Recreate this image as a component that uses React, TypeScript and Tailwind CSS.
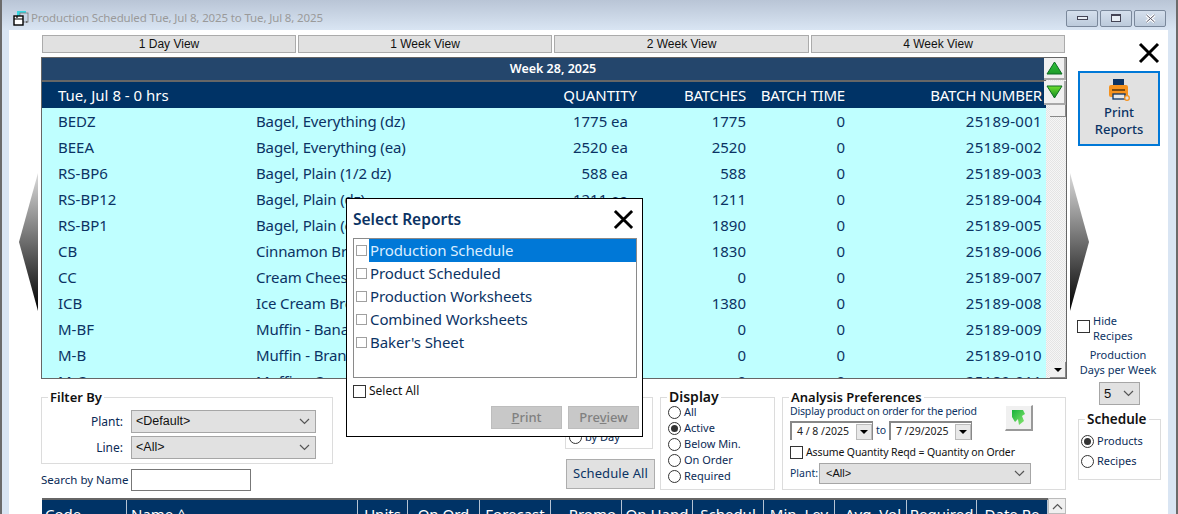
import React from "react";

const rows = [
  ["BEDZ", "Bagel, Everything (dz)", "1775 ea", "1775", "0", "25189-001"],
  ["BEEA", "Bagel, Everything (ea)", "2520 ea", "2520", "0", "25189-002"],
  ["RS-BP6", "Bagel, Plain (1/2 dz)", "588 ea", "588", "0", "25189-003"],
  ["RS-BP12", "Bagel, Plain (dz)", "1211 ea", "1211", "0", "25189-004"],
  ["RS-BP1", "Bagel, Plain (ea)", "1890 ea", "1890", "0", "25189-005"],
  ["CB", "Cinnamon Bread", "1830 ea", "1830", "0", "25189-006"],
  ["CC", "Cream Cheese", "0 ea", "0", "0", "25189-007"],
  ["ICB", "Ice Cream Bread", "1380 ea", "1380", "0", "25189-008"],
  ["M-BF", "Muffin - Banana", "0 ea", "0", "0", "25189-009"],
  ["M-B", "Muffin - Bran", "0 ea", "0", "0", "25189-010"],
  ["M-C", "Muffin - Corn", "0 ea", "0", "0", "25189-011"],
];

const reports = ["Production Schedule", "Product Scheduled", "Production Worksheets", "Combined Worksheets", "Baker's Sheet"];

const bottomCols: [string, string][] = [
  ["Code", "w-[85px] pl-[3px]"],
  ["Name ^", "w-[231px] pl-[4px]"],
  ["Units", "w-[50px] text-center"],
  ["On Ord", "w-[72px] text-center"],
  ["Forecast", "w-[71px] text-center"],
  ["Promo", "w-[71px] text-right pr-[5px]"],
  ["On Hand", "w-[71px] text-center"],
  ["Schedul", "w-[71px] text-center"],
  ["Min. Lev", "w-[71px] text-center"],
  ["Avg. Vol", "w-[72px] text-right pr-[5px]"],
  ["Required", "w-[70px] text-center"],
  ["Date Re", "w-[71px] text-center"],
];

function Chevron({ className = "" }: { className?: string }) {
  return (
    <svg width="11" height="7" viewBox="0 0 11 7" className={className}>
      <path d="M1 1l4.5 4.5L10 1" fill="none" stroke="#555" strokeWidth="1.2" />
    </svg>
  );
}

function BigX({ size }: { size: number }) {
  return (
    <svg width={size} height={size} viewBox="0 0 22 22">
      <path d="M2 2l18 18M20 2L2 20" stroke="#000" strokeWidth="3" />
    </svg>
  );
}

function Radio({ on, label, cls = "" }: { on?: boolean; label: string; cls?: string }) {
  return (
    <div className={`flex items-center gap-[3px] h-4 text-[11px] text-[#0a2a55] whitespace-nowrap ${cls}`}>
      <span className="w-[13px] h-[13px] rounded-full border border-[#333] bg-white flex items-center justify-center shrink-0">
        {on && <span className="w-[7px] h-[7px] rounded-full bg-[#333]" />}
      </span>
      <span>{label}</span>
    </div>
  );
}

function Group({ title, cls, titleCls = "text-[13px]", children }: { title?: string; cls: string; titleCls?: string; children: React.ReactNode }) {
  return (
    <div className={`relative border border-[#dcdcdc] ${cls}`}>
      {title && <span className={`absolute -top-[10px] left-[6px] bg-white px-[2px] font-semibold text-[#111] leading-[18px] whitespace-nowrap ${titleCls}`}>{title}</span>}
      {children}
    </div>
  );
}

function DateBox({ value }: { value: string }) {
  return (
    <div className="flex h-[19px] w-[83px] border-t-2 border-l-2 border-r border-[#888] bg-white items-center">
      <span className="flex-1 pl-[5px] text-[10.5px] text-[#222] whitespace-nowrap">{value}</span>
      <span className="w-[16px] h-[16px] bg-[#e8e8e8] border border-[#bbb] flex items-center justify-center shrink-0">
        <span className="w-0 h-0 border-l-[4px] border-r-[4px] border-t-[4px] border-l-transparent border-r-transparent border-t-black" />
      </span>
    </div>
  );
}

function Select({ value, w, h = "h-[23px]", pl = "pl-1", size = "text-[12.5px]" }: { value: string; w: string; h?: string; pl?: string; size?: string }) {
  return (
    <div className={`flex items-center justify-between bg-[#e1e1e1] border border-[#a6a6a6] ${w} ${h} ${pl} pr-[5px] text-[#111] ${size}`} style={{ fontFamily: "'Liberation Sans', sans-serif" }}>
      <span>{value}</span>
      <Chevron />
    </div>
  );
}

function GreenTri({ down }: { down?: boolean }) {
  return (
    <svg width="17" height="14" viewBox="0 0 17 14">
      <defs>
        <linearGradient id={down ? "gd" : "gu"} x1="0" y1="0" x2="0" y2="1">
          <stop offset="0" stopColor={down ? "#6fe02e" : "#2fc43a"} />
          <stop offset="1" stopColor={down ? "#0f8a22" : "#1e9a2a"} />
        </linearGradient>
      </defs>
      <path d={down ? "M1 1h15L8.5 13z" : "M8.5 1L16 13H1z"} fill={`url(#${down ? "gd" : "gu"})`} stroke="#0c6b22" strokeWidth="1" />
    </svg>
  );
}

export default function App() {
  return (
    <div className="relative w-[1178px] h-[514px] overflow-hidden flex flex-col bg-[#d9e5f3] border-l-2 border-r-2 border-[#6b6b6b]" style={{ fontFamily: "'Noto Sans', 'Open Sans', sans-serif" }}>
      {/* Title bar */}
      <div className="h-[30px] flex items-center pt-[6px] pl-[10px] pr-[10px] bg-gradient-to-b from-[#b9c5d6] to-[#d9e5f3] shrink-0">
        <svg width="18" height="16" viewBox="0 0 18 16" className="shrink-0">
          <rect x="5" y="1" width="9" height="7" fill="#35d6e0" />
          <rect x="8" y="3" width="8" height="9" fill="#c6d4e4" stroke="#777" strokeWidth="0.8" />
          <rect x="2" y="6" width="9" height="9" fill="#fff" stroke="#000" strokeWidth="1.4" />
          <path d="M2 9h9M5 6v2" stroke="#000" strokeWidth="1.2" />
          <path d="M14 11l2 1-2 1z" fill="#555" />
        </svg>
        <span className="ml-[1px] text-[11.5px] text-[#9a9a9a] tracking-[-0.14px] whitespace-nowrap">Production Scheduled Tue, Jul 8, 2025 to Tue, Jul 8, 2025</span>
        <div className="ml-auto flex gap-[2px]">
          {[0, 1, 2].map((i) => (
            <div key={i} className="w-[32px] h-[17px] rounded-[2px] border border-[#7a889b] bg-gradient-to-b from-[#d5e0ed] to-[#bccadb] flex items-center justify-center">
              {i === 0 && <span className="w-[11px] h-[4px] bg-[#e8eef5] border border-[#445]" />}
              {i === 1 && <span className="w-[10px] h-[8px] bg-[#e8eef5] border border-[#445] border-t-2" />}
              {i === 2 && (
                <svg width="11" height="9" viewBox="0 0 11 9">
                  <path d="M1.5 1l8 7M9.5 1l-8 7" stroke="#fff" strokeWidth="3" />
                  <path d="M1.5 1l8 7M9.5 1l-8 7" stroke="#556" strokeWidth="1" />
                </svg>
              )}
            </div>
          ))}
        </div>
      </div>

      {/* Client */}
      <div className="flex-1 min-h-0 ml-[7px] mr-[8px] bg-white flex overflow-hidden">
        {/* Left part */}
        <div className="w-[1058px] shrink-0 flex flex-col">
          <div className="flex">
            {/* Left arrow */}
            <div className="w-[32px] shrink-0 pt-[143px] pl-[10px]">
              <svg width="19" height="138" viewBox="0 0 19 138" className="block">
                <defs>
                  <linearGradient id="la" x1="0" y1="0" x2="0" y2="1">
                    <stop offset="0" stopColor="#dadada" />
                    <stop offset="1" stopColor="#000" />
                  </linearGradient>
                </defs>
                <path d="M19 0L0 69l19 69z" fill="url(#la)" />
              </svg>
            </div>
            {/* Centre */}
            <div className="w-[1026px] shrink-0 flex flex-col">
              <div className="flex gap-[2px] pt-[5px] pl-[1px] h-[27px]">
                {["1 Day View", "1 Week View", "2 Week View", "4 Week View"].map((t, i) => (
                  <div key={t} className={`h-[18px] ${i === 2 ? "w-[255px]" : "w-[254px]"} bg-[#e1e1e1] border border-[#ababab] flex items-center justify-center text-[12px] text-[#111]`} style={{ fontFamily: "'Liberation Sans', sans-serif" }}>
                    {t}
                  </div>
                ))}
              </div>
              <div className="h-[322px] flex border border-[#666]">
                <div className="w-[1004px] shrink-0 flex flex-col overflow-hidden">
                  <div className="h-[24px] bg-[#24466c] border-b-2 border-[#666] flex items-center justify-center pl-[18px] text-[12.5px] font-semibold text-white shrink-0">Week 28, 2025</div>
                  <div className="h-[26px] bg-[#003366] flex items-center text-white text-[15px] shrink-0 whitespace-nowrap">
                    <span className="w-[16px]" />
                    <span className="w-[198px]">Tue, Jul 8 - 0 hrs</span>
                    <span className="w-[381px] text-right">QUANTITY</span>
                    <span className="w-[109px] text-right tracking-[-0.2px]">BATCHES</span>
                    <span className="w-[99px] text-right tracking-[-0.2px]">BATCH TIME</span>
                    <span className="w-[197px] text-right tracking-[-0.2px]">BATCH NUMBER</span>
                  </div>
                  <div className="flex-1 min-h-0 bg-[#bfffff] overflow-hidden">
                    {rows.map((r) => (
                      <div key={r[5]} className="h-[26px] flex items-center text-[15px] text-[#0b3364] whitespace-nowrap">
                        <span className="w-[16px] shrink-0" />
                        <span className="w-[198px] shrink-0">{r[0]}</span>
                        <span className="w-[200px] shrink-0 tracking-[-0.14px]">{r[1]}</span>
                        <span className="w-[172px] shrink-0 text-right">{r[2]}</span>
                        <span className="w-[118px] shrink-0 text-right">{r[3]}</span>
                        <span className="w-[99px] shrink-0 text-right">{r[4]}</span>
                        <span className="w-[197px] shrink-0 text-right tracking-[0.3px]">{r[5]}</span>
                      </div>
                    ))}
                  </div>
                </div>
                {/* Scrollbar */}
                <div className="flex-1 bg-[repeating-conic-gradient(#f6f6f6_0_25%,#e4e4e4_0_50%)] bg-[length:2px_2px] relative">
                  <div className="absolute -left-[2px] top-0 w-[22px] h-[22px] bg-[#f0f0f0] border-r-2 border-b-2 border-[#a8a8a8] flex items-center justify-center z-10">
                    <GreenTri />
                  </div>
                  <div className="absolute -left-[2px] top-[23px] w-[22px] h-[24px] bg-[#f0f0f0] border-r-2 border-b-2 border-[#a8a8a8] flex items-center justify-center z-10">
                    <GreenTri down />
                  </div>
                  <div className="absolute left-[4px] top-[47px] w-[16px] h-[12px] bg-[#f0f0f0] border-r border-b border-[#888]" />
                  <div className="absolute left-[4px] bottom-0 w-[16px] h-[16px] bg-[#f0f0f0] border-r border-b border-[#888] flex items-center justify-center">
                    <span className="w-0 h-0 border-l-[4px] border-r-[4px] border-t-[4px] border-l-transparent border-r-transparent border-t-black" />
                  </div>
                </div>
              </div>
            </div>
          </div>

          {/* Filter section */}
          <div className="flex h-[113px] shrink-0 pl-[32px] pt-[18px] gap-[7px]">
            <div className="w-[292px] shrink-0 flex flex-col">
              <Group title="Filter By" cls="h-[67px] pt-[12px]">
                <div className="flex items-center justify-end pr-[16px] gap-[8px] text-[12px] text-[#0a2a55] h-[23px]">
                  <span>Plant:</span>
                  <Select value="<Default>" w="w-[185px]" />
                </div>
                <div className="flex items-center justify-end pr-[16px] gap-[8px] text-[12px] text-[#0a2a55] h-[23px] mt-[3px]">
                  <span>Line:</span>
                  <Select value="<All>" w="w-[185px]" />
                </div>
              </Group>
              <div className="flex items-center mt-[5px] h-[22px] text-[11.5px] text-[#0a2a55] whitespace-nowrap">
                <span className="w-[90px]">Search by Name</span>
                <span className="w-[120px] h-[22px] border border-[#777] bg-white" />
              </div>
            </div>
            <div className="w-[313px] shrink-0 flex flex-col items-end">
              <Group cls="w-[88px] h-[52px]">
                <Radio label="by Day" cls="absolute left-[3px] top-[31px]" />
              </Group>
              <div className="mt-[10px] -mr-[2px] w-[89px] h-[30px] bg-[#e1e1e1] border border-[#adadad] flex items-center justify-center text-[13px] text-[#0b3364] tracking-[0.1px] whitespace-nowrap">Schedule All</div>
            </div>
            <Group title="Display" titleCls="text-[14px]" cls="w-[115px] h-[93px] pt-[6px] pl-[7px] flex flex-col">
              <Radio label="All" />
              <Radio on label="Active" />
              <Radio label="Below Min." />
              <Radio label="On Order" />
              <Radio label="Required" />
            </Group>
            <Group title="Analysis Preferences" cls="w-[284px] h-[93px] pl-[7px]">
              <div className="flex">
                <div className="w-[215px] shrink-0">
                  <div className="text-[10.5px] tracking-[-0.18px] text-[#0b3364] mt-[6px] leading-[14px] whitespace-nowrap">Display product on order for the period</div>
                  <div className="flex items-center mt-[3px] gap-[3px]">
                    <DateBox value="4 / 8 /2025" />
                    <span className="text-[10.5px] w-[10px] text-center text-[#0b3364]">to</span>
                    <DateBox value="7 /29/2025" />
                  </div>
                </div>
                <div className="mt-[7px] w-[28px] h-[26px] bg-[#f0f0f0] border-t border-l border-white border-r-2 border-b-2 border-r-[#999] border-b-[#999] flex items-center justify-center">
                  <svg width="15" height="17" viewBox="0 0 15 17">
                    <defs>
                      <linearGradient id="ga" x1="0" y1="0" x2="1" y2="1">
                        <stop offset="0" stopColor="#17b23a" />
                        <stop offset="1" stopColor="#8ae870" />
                      </linearGradient>
                    </defs>
                    <path d="M1 1h11l2 4-3 2 2 5-5 4-1-6-3 3-3-5z" fill="url(#ga)" />
                  </svg>
                </div>
              </div>
              <div className="flex items-center gap-[3px] mt-[5px] h-[14px]">
                <span className="w-[13px] h-[13px] border border-[#333] bg-white shrink-0" />
                <span className="text-[10.5px] text-[#111] whitespace-nowrap tracking-[-0.13px] pt-[1px]">Assume Quantity Reqd = Quantity on Order</span>
              </div>
              <div className="flex items-center gap-[3px] mt-[4px]">
                <span className="text-[10.5px] w-[26px] text-[#0b3364] pt-[1px]">Plant:</span>
                <Select value="<All>" w="w-[212px]" h="h-[21px]" pl="pl-[6px]" size="text-[11px]" />
              </div>
            </Group>
          </div>

          {/* Bottom table */}
          <div className="pl-[33px] pt-[6px]">
            <div className="flex w-[1024px] h-[30px] overflow-hidden">
              <div className="w-[1006px] shrink-0 bg-[#003366] border-t-2 border-[#666] flex overflow-hidden text-white text-[15px] leading-[28px]">
                {bottomCols.map(([t, w]) => (
                  <span key={t} className={`${w} shrink-0 border-r border-[#b5c3d3] whitespace-nowrap overflow-hidden`}>{t}</span>
                ))}
              </div>
              <div className="w-[18px] h-[16px] bg-[#f0f0f0] border border-[#bbb] flex items-center justify-center">
                <Chevron className="rotate-180" />
              </div>
            </div>
          </div>
        </div>

        {/* Right column */}
        <div className="flex-1 flex flex-col">
          <div className="flex justify-end pr-[8px] pt-[12px] h-[41px] shrink-0">
            <BigX size={22} />
          </div>
          <div className="ml-[11px] w-[82px] h-[75px] shrink-0 bg-[#e1e1e1] border-2 border-[#0078d7] flex flex-col items-center pt-[4px] text-[13px] font-medium leading-[17px] text-[#0b3364]">
            <svg width="24" height="24" viewBox="0 0 24 24" className="mb-[3px] block">
              <rect x="6" y="2" width="11" height="7" fill="#0b3364" />
              <rect x="2" y="8" width="19" height="12" rx="2" fill="#f5921e" />
              <rect x="5" y="12" width="13" height="2" fill="#7a4a10" />
              <rect x="6" y="17" width="12" height="5" fill="#e8e8e8" stroke="#0b3364" strokeWidth="1.3" />
              <circle cx="20" cy="21" r="2.3" fill="#e1e1e1" stroke="#f5921e" strokeWidth="1.3" />
            </svg>
            <span>Print</span>
            <span>Reports</span>
          </div>
          <div className="pl-[3px] mt-[27px] shrink-0">
            <svg width="19" height="138" viewBox="0 0 19 138" className="block">
              <defs>
                <linearGradient id="ra" x1="0" y1="0" x2="0" y2="1">
                  <stop offset="0" stopColor="#dadada" />
                  <stop offset="1" stopColor="#000" />
                </linearGradient>
              </defs>
              <path d="M0 0l19 69L0 138z" fill="url(#ra)" />
            </svg>
          </div>
          <div className="flex items-start mt-[2px] pl-[10px] text-[11px] leading-[15px] text-[#0b3364] shrink-0">
            <span className="w-[13px] h-[13px] border border-[#333] bg-white shrink-0 mt-[7px]" />
            <span className="ml-[3px]">Hide<br />Recipes</span>
          </div>
          <div className="w-[84px] ml-[9px] mt-[4px] text-center text-[11px] leading-[15px] text-[#0b3364] whitespace-nowrap shrink-0">Production<br />Days per Week</div>
          <div className="ml-[32px] mt-[5px] shrink-0">
            <Select value="5" w="w-[41px]" pl="pl-[4px]" size="text-[13px]" />
          </div>
          <Group title="Schedule" titleCls="text-[13.5px]" cls="ml-[11px] mt-[14px] w-[83px] h-[61px] pl-[2px] pt-[11px] shrink-0">
            <Radio on label="Products" cls="!h-[20px]" />
            <Radio label="Recipes" cls="!h-[20px]" />
          </Group>
        </div>
      </div>

      {/* Select Reports modal */}
      <div className="absolute left-[344px] top-[198px] w-[297px] h-[239px] bg-white border border-black px-[6px]">
        <div className="flex items-center justify-between h-[39px] pr-[2px] pt-[2px]">
          <span className="text-[15.5px] font-semibold text-[#0b3364]">Select Reports</span>
          <BigX size={21} />
        </div>
        <div className="w-[284px] h-[140px] border border-[#8a8a8a] bg-white">
          {reports.map((r, i) => (
            <div key={r} className={`h-[23px] flex items-center text-[15px] whitespace-nowrap ${i === 0 ? "text-[#dceeff]" : "text-[#0b3364]"}`}>
              <span className="ml-[2px] w-[11px] h-[11px] border border-[#a0a0a0] bg-white shrink-0" />
              <span className={`ml-[2px] flex-1 h-[23px] pl-[1px] leading-[23px] tracking-[-0.1px] ${i === 0 ? "bg-[#0078d7]" : ""}`}>{r}</span>
            </div>
          ))}
        </div>
        <div className="flex items-center gap-[3px] mt-[6px] h-[14px]">
          <span className="w-[13px] h-[13px] border border-[#333] bg-white" />
          <span className="text-[12px] text-[#111]">Select All</span>
        </div>
        <div className="flex justify-end gap-[6px] mt-[8px] mr-[-3px]">
          <div className="w-[71px] h-[23px] bg-[#c8c8c8] border border-[#bdbdbd] flex items-center justify-center text-[13px] font-medium text-[#808080]"><span><u>P</u>rint</span></div>
          <div className="w-[71px] h-[23px] bg-[#c8c8c8] border border-[#bdbdbd] flex items-center justify-center text-[13px] font-medium text-[#808080]"><span>Pre<u>v</u>iew</span></div>
        </div>
      </div>
    </div>
  );
}
